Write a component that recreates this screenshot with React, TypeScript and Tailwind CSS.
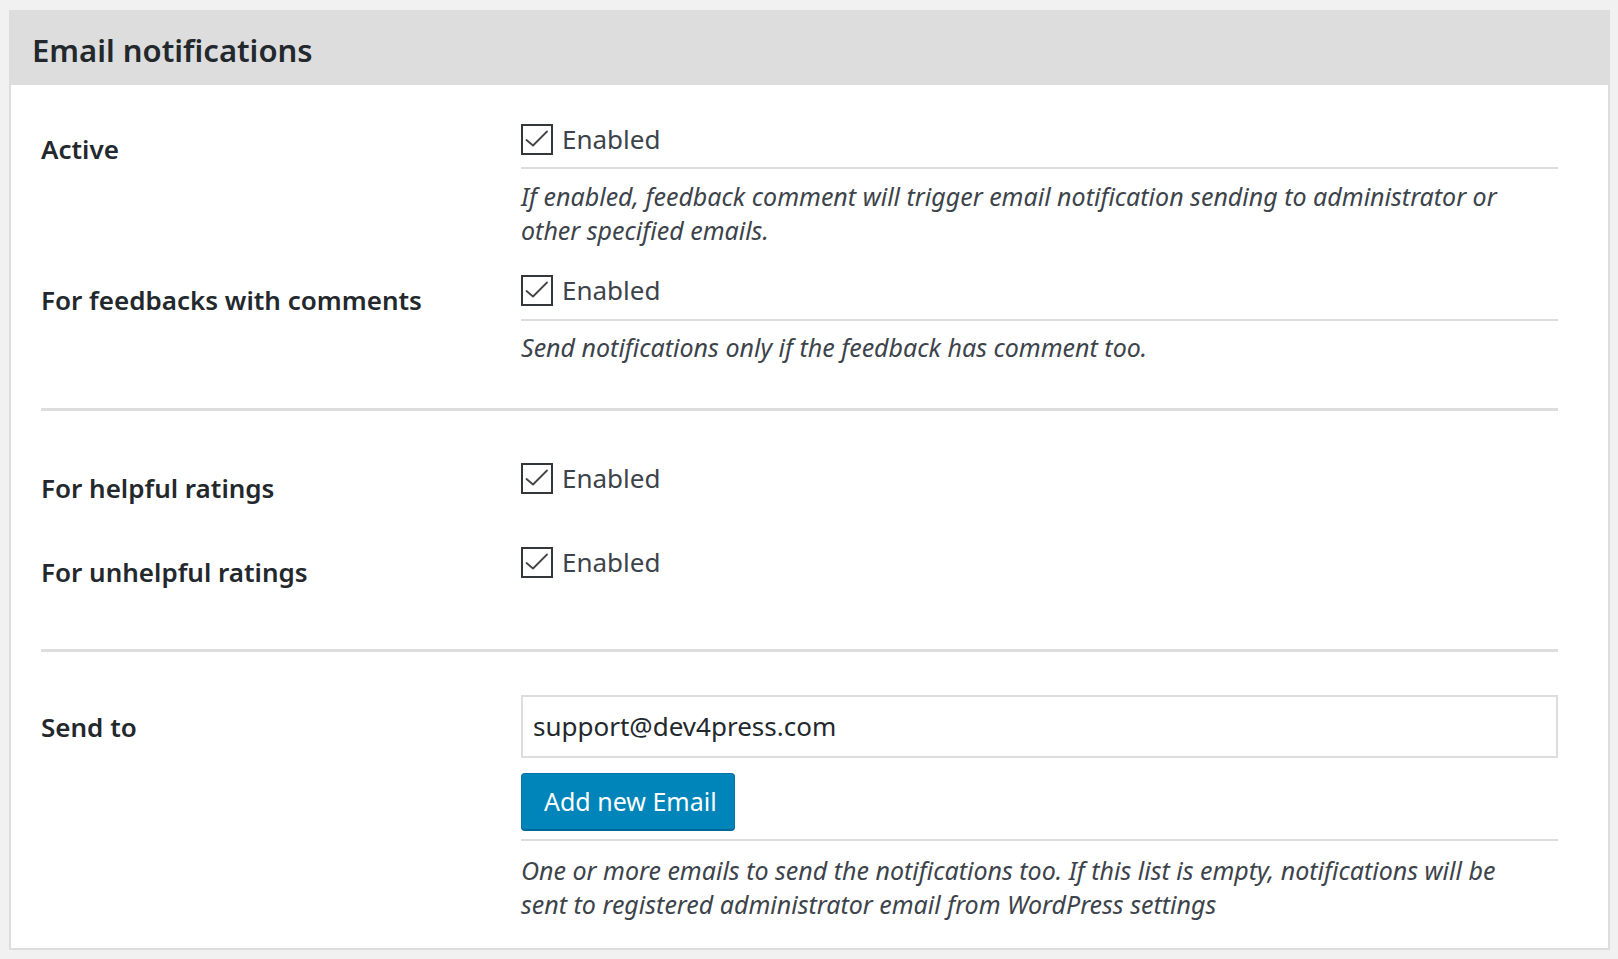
import React from "react";

const font = { fontFamily: '"Noto Sans", "Open Sans", sans-serif' };

function Check({ label }: { label: string }) {
  return (
    <div className="flex items-center h-[31px]">
      <span className="w-[32px] h-[31px] border-2 border-[#32373c] bg-white flex items-center justify-center shrink-0">
        <svg width="28" height="27" viewBox="0 0 28 27">
          <path d="M3.5 14 L10 19.5 L24 5.5" fill="none" stroke="#444" strokeWidth="1.8" strokeLinecap="round" strokeLinejoin="round" />
        </svg>
      </span>
      <span className="ml-[9px] text-[26px] leading-[31px] text-[#3c434a]">{label}</span>
    </div>
  );
}

function Label({ children, className = "" }: { children: React.ReactNode; className?: string }) {
  return (
    <div className={"w-[510px] shrink-0 pl-[30px] text-[26px] leading-[36px] font-semibold text-[#23282d] " + className}>
      {children}
    </div>
  );
}

export default function App() {
  return (
    <div className="min-h-screen bg-[#f1f1f1] pt-[10px] pl-[9px] pr-[8px] pb-[9px]" style={font}>
      <div className="border-2 border-[#dddddd] bg-white">
        <div className="h-[73px] bg-[#dddddd] pl-[21px] flex items-center">
          <h2 className="text-[31px] font-semibold text-[#23282d] leading-[40px] mt-[2px]">Email notifications</h2>
        </div>

        <div className="pr-[50px]">
          {/* Row 1 */}
          <div className="flex mt-[39px]">
            <Label className="pt-[7px]">Active</Label>
            <div className="flex-1">
              <div className="pb-[12px] border-b-2 border-[#dddddd]">
                <Check label="Enabled" />
              </div>
              <p className="mt-[10px] text-[25px] leading-[34px] italic text-[#3c434a]">
                If enabled, feedback comment will trigger email notification sending to administrator or
                <br />
                other specified emails.
              </p>
            </div>
          </div>

          {/* Row 2 */}
          <div className="flex mt-[28px]">
            <Label className="pt-[7px]">For feedbacks with comments</Label>
            <div className="flex-1">
              <div className="pb-[13px] border-b-2 border-[#dddddd]">
                <Check label="Enabled" />
              </div>
              <p className="mt-[9px] text-[25px] leading-[34px] italic text-[#3c434a]">
                Send notifications only if the feedback has comment too.
              </p>
            </div>
          </div>

          <div className="ml-[30px] mt-[44px] h-[3px] bg-[#dddddd]" />

          {/* Row 3 */}
          <div className="flex mt-[52px]">
            <Label className="pt-[7px]">For helpful ratings</Label>
            <div className="flex-1">
              <Check label="Enabled" />
            </div>
          </div>

          {/* Row 4 */}
          <div className="flex mt-[41px]">
            <Label className="pt-[7px]">For unhelpful ratings</Label>
            <div className="flex-1">
              <Check label="Enabled" />
            </div>
          </div>

          <div className="ml-[30px] mt-[59px] h-[3px] bg-[#dddddd]" />

          {/* Row 5 */}
          <div className="flex mt-[43px] pb-[27px]">
            <Label className="pt-[14px]">Send to</Label>
            <div className="flex-1">
              <div className="h-[63px] border-2 border-[#dddddd] flex items-center pl-[10px] text-[26px] text-[#23282d] bg-white">
                support@dev4press.com
              </div>
              <div className="pb-[9px] border-b-2 border-[#dddddd]">
                <button className="mt-[15px] h-[57px] w-[214px] rounded-[4px] bg-[#0085ba] border border-[#0073aa] border-b-[#006799] shadow-[0_1px_0_#006799] text-white text-[25px] leading-[55px] text-left pl-[22px]">
                  Add new Email
                </button>
              </div>
              <p className="mt-[12px] text-[25px] leading-[34px] italic text-[#3c434a]">
                One or more emails to send the notifications too. If this list is empty, notifications will be
                <br />
                sent to registered administrator email from WordPress settings
              </p>
            </div>
          </div>
        </div>
      </div>
    </div>
  );
}
